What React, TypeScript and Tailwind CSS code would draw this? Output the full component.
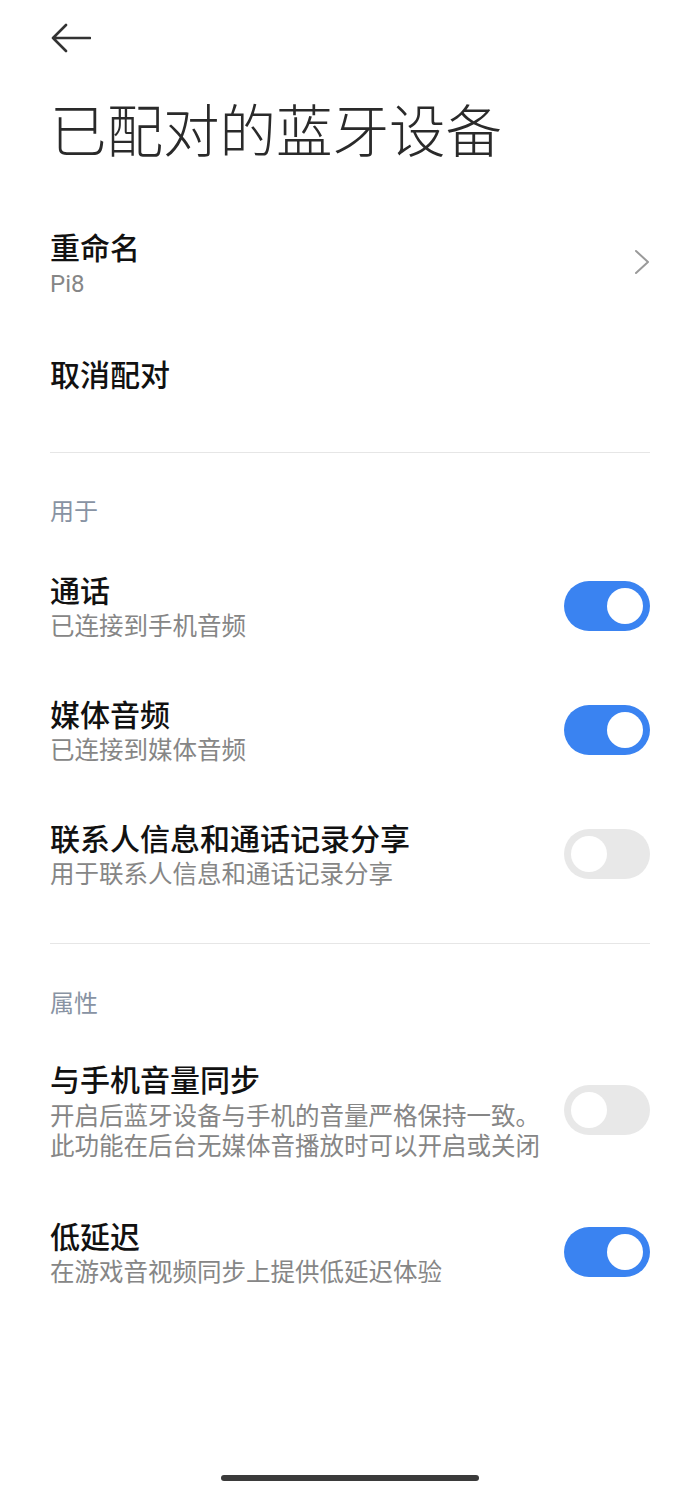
import React from "react";

const FONT = '"Noto Sans CJK SC", "Noto Sans", sans-serif';
const DESC_FONT = '"Liberation Sans", "Noto Sans CJK SC", sans-serif';

function Toggle({ on }: { on: boolean }) {
  return (
    <div
      className={`flex h-[50px] w-[86px] shrink-0 items-center rounded-full px-[7px] ${
        on ? "justify-end bg-[#3a83f1]" : "justify-start bg-[#e8e8e8]"
      }`}
    >
      <div className="h-[36px] w-[36px] rounded-full bg-white" />
    </div>
  );
}

function Row({
  title,
  desc,
  on,
  className,
}: {
  title: string;
  desc: string[];
  on: boolean;
  className?: string;
}) {
  const multi = desc.length > 1;
  return (
    <div className={`flex items-center justify-between ${className ?? ""}`}>
      <div className="flex flex-col">
        <div className="text-[30px] font-medium leading-[40px] text-[#111111]">{title}</div>
        <div className={multi ? "mt-[4px]" : "mt-[2px]"} style={{ fontFamily: DESC_FONT }}>
          {desc.map((d, i) => (
            <div
              key={i}
              className={`text-[24.5px] text-[#868686] ${multi ? "leading-[30px]" : "leading-[32px]"}`}
            >
              {d}
            </div>
          ))}
        </div>
      </div>
      <Toggle on={on} />
    </div>
  );
}

export default function App() {
  return (
    <div
      className="flex min-h-[1492px] w-full flex-col bg-white px-[50px]"
      style={{ fontFamily: FONT }}
    >
      <div className="flex h-[76px] items-center">
        <svg width="40" height="30" viewBox="0 0 40 30" fill="none" className="ml-[1px]">
          <path
            d="M15 2 L2 15 L15 28 M2 15 H39"
            stroke="#333333"
            strokeWidth="2.6"
            strokeLinecap="round"
            strokeLinejoin="round"
          />
        </svg>
      </div>

      <h1 className="mt-[18px] text-[56.5px] font-light leading-[67px] text-[#2a2a2a]">
        已配对的蓝牙设备
      </h1>

      <div className="mt-[65px] flex items-center justify-between">
        <div className="flex flex-col">
          <div className="text-[30px] font-medium leading-[40px] text-[#111111]">重命名</div>
          <div
            className="mt-[2px] text-[24px] leading-[32px] text-[#868686]"
            style={{ fontFamily: '"Roboto", "Noto Sans", sans-serif' }}
          >
            Pi8
          </div>
        </div>
        <svg width="16" height="26" viewBox="0 0 16 26" fill="none" className="mt-[-3px]">
          <path
            d="M2 2 L14 13 L2 24"
            stroke="#9a9a9a"
            strokeWidth="2"
            strokeLinecap="round"
            strokeLinejoin="round"
          />
        </svg>
      </div>

      <div className="mt-[53px] text-[30px] font-medium leading-[40px] text-[#111111]">取消配对</div>

      <div className="mt-[59px] h-px w-full bg-[#e6e6e6]" />

      <div className="mt-[42px] text-[24px] leading-[30px] text-[#8893a3]">用于</div>

      <Row className="mt-[44px]" title="通话" desc={["已连接到手机音频"]} on={true} />
      <Row className="mt-[50px]" title="媒体音频" desc={["已连接到媒体音频"]} on={true} />
      <Row
        className="mt-[50px]"
        title="联系人信息和通话记录分享"
        desc={["用于联系人信息和通话记录分享"]}
        on={false}
      />

      <div className="mt-[52px] h-px w-full bg-[#e6e6e6]" />

      <div className="mt-[43px] text-[24px] leading-[30px] text-[#8893a3]">属性</div>

      <Row
        className="mt-[41px]"
        title="与手机音量同步"
        desc={["开启后蓝牙设备与手机的音量严格保持一致。", "此功能在后台无媒体音播放时可以开启或关闭"]}
        on={false}
      />
      <Row className="mt-[53px]" title="低延迟" desc={["在游戏音视频同步上提供低延迟体验"]} on={true} />

      <div className="mt-auto mb-[11px] flex justify-center">
        <div className="h-[6px] w-[258px] rounded-full bg-[#3b3b3b]" />
      </div>
    </div>
  );
}
